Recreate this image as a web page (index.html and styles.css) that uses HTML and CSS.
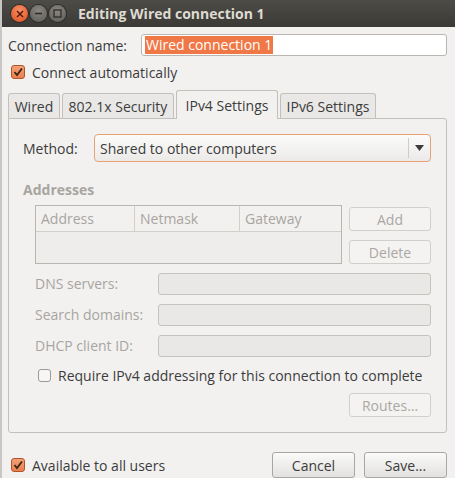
FILE: index.html
```html
<!DOCTYPE html>
<html lang="en">
<head>
  <meta charset="UTF-8" />
  <meta name="viewport" content="width=device-width, initial-scale=1.0">
  <title>Editing Wired connection 1</title>
  <link rel="stylesheet" href="styles.css">
</head>
<body>
  <div class="window">
    <div class="titlebar">
      <div class="wm-buttons">
        <span class="wm-btn close">
          <svg width="8" height="8" viewBox="0 0 8 8"><path d="M1 1 L7 7 M7 1 L1 7" stroke="#5a1a08" stroke-width="1.6"/></svg>
        </span>
        <span class="wm-btn">
          <svg width="9" height="9" viewBox="0 0 9 9"><path d="M1 4.5 H8" stroke="#2e2d2a" stroke-width="1.6"/></svg>
        </span>
        <span class="wm-btn">
          <svg width="9" height="9" viewBox="0 0 9 9"><rect x="1" y="1" width="7" height="7" fill="none" stroke="#2e2d2a" stroke-width="1.3"/></svg>
        </span>
      </div>
      <span class="title">Editing Wired connection 1</span>
    </div>

    <div class="content">
      <div class="name-row">
        <label>Connection name:</label>
        <div class="entry"><span class="selected">Wired connection 1</span></div>
      </div>

      <div class="check-row">
        <span class="check on">
          <svg width="12" height="12" viewBox="0 0 12 12"><path d="M2.5 6 L5 9 L10 2.5" fill="none" stroke="#3a2416" stroke-width="1.8"/></svg>
        </span>
        <span>Connect automatically</span>
      </div>

      <div class="tabs">
        <span class="tab tab-wired">Wired</span>
        <span class="tab tab-sec">802.1x Security</span>
        <span class="tab active">IPv4 Settings</span>
        <span class="tab tab-v6">IPv6 Settings</span>
      </div>

      <div class="panel">
        <div class="method-row">
          <label>Method:</label>
          <div class="combo">
            <span class="combo-text">Shared to other computers</span>
            <span class="combo-arrow">
              <svg width="9" height="6" viewBox="0 0 9 6"><path d="M0 0 H9 L4.5 6 Z" fill="#3c3c3c"/></svg>
            </span>
          </div>
        </div>

        <div class="section-title">Addresses</div>

        <div class="addresses">
          <div class="table">
            <div class="thead">
              <span class="col c1">Address</span>
              <span class="col c2">Netmask</span>
              <span class="col c3">Gateway</span>
            </div>
            <div class="tbody"></div>
          </div>
          <div class="side-buttons">
            <span class="btn disabled">Add</span>
            <span class="btn disabled">Delete</span>
          </div>
        </div>

        <div class="field-row">
          <label>DNS servers:</label>
          <div class="entry disabled"></div>
        </div>
        <div class="field-row">
          <label>Search domains:</label>
          <div class="entry disabled"></div>
        </div>
        <div class="field-row">
          <label>DHCP client ID:</label>
          <div class="entry disabled"></div>
        </div>

        <div class="require-row">
          <span class="check"></span>
          <span>Require IPv4 addressing for this connection to complete</span>
        </div>

        <div class="routes-row">
          <span class="btn disabled routes">Routes…</span>
        </div>
      </div>

      <div class="footer">
        <div class="check-row footer-check">
          <span class="check on">
            <svg width="12" height="12" viewBox="0 0 12 12"><path d="M2.5 6 L5 9 L10 2.5" fill="none" stroke="#3a2416" stroke-width="1.8"/></svg>
          </span>
          <span>Available to all users</span>
        </div>
        <div class="footer-buttons">
          <span class="btn">Cancel</span>
          <span class="btn">Save...</span>
        </div>
      </div>
    </div>
  </div>
</body>
</html>
```

FILE: styles.css
```css
body {
  margin: 0;
  background-color: #f2f1f0;
  font-family: "Open Sans", "Liberation Sans", sans-serif;
  font-size: 14px;
  color: #3c3c3c;
}
.window {
  width: 455px;
  height: 478px;
  overflow: hidden;
  box-sizing: border-box;
  border-left: 2px solid #c9c7c3;
}
.titlebar {
  height: 27px;
  margin-left: -2px;
  display: flex;
  align-items: center;
  background: linear-gradient(#4d4c47, #3a3935);
  color: #dfdbd2;
}
.wm-buttons {
  display: flex;
  gap: 2px;
  padding-left: 11px;
  width: 67px;
}
.wm-btn {
  width: 17px;
  height: 17px;
  border-radius: 50%;
  display: flex;
  align-items: center;
  justify-content: center;
  background: radial-gradient(circle at 50% 35%, #8a8780, #5b5954);
  box-shadow: 0 0 0 1px #2d2c29;
}
.wm-btn.close {
  background: radial-gradient(circle at 50% 35%, #f79168, #dd4c1b);
}
.title {
  font-weight: bold;
  font-size: 14px;
}
.content {
  padding: 0 8px 0 6px;
}
.name-row {
  display: flex;
  align-items: center;
  margin-top: 7px;
  height: 22px;
}
.name-row label {
  width: 133px;
}
.entry {
  flex: 1;
  height: 22px;
  box-sizing: border-box;
  border: 1px solid #bab7b2;
  border-radius: 3px;
  background-color: #fff;
  display: flex;
  align-items: center;
  padding-left: 3px;
}
.selected {
  background-color: #f07746;
  color: #fff;
  line-height: 18px;
  padding: 0 1px;
}
.check-row {
  display: flex;
  align-items: center;
  gap: 7px;
  margin-top: 9px;
  height: 14px;
  padding-left: 3px;
}
.check {
  width: 14px;
  height: 14px;
  box-sizing: border-box;
  border: 1px solid #a7a49f;
  border-radius: 3px;
  background: linear-gradient(#ffffff, #ebeae8);
  display: flex;
  align-items: center;
  justify-content: center;
}
.check.on {
  border-color: #b0542a;
  background: linear-gradient(#f4a177, #e9804e);
}
.tabs {
  display: flex;
  align-items: flex-end;
  margin-top: 11px;
  height: 28px;
  gap: 2px;
}
.tab {
  height: 25px;
  box-sizing: border-box;
  border: 1px solid #c3c0bb;
  border-bottom: none;
  border-radius: 3px 3px 0 0;
  background-color: #e9e8e6;
  display: flex;
  align-items: center;
  justify-content: center;
}
.tab-wired { width: 52px; }
.tab-sec { width: 112px; }
.tab-v6 { width: 96px; }
.tab.active {
  width: 102px;
  height: 29px;
  background-color: #f2f1f0;
  margin-bottom: -1px;
  position: relative;
  z-index: 1;
}
.panel {
  height: 315px;
  box-sizing: border-box;
  border: 1px solid #c3c0bb;
  border-radius: 0 3px 3px 3px;
  padding: 15px 15px 0 14px;
}
.method-row {
  display: flex;
  align-items: center;
  height: 28px;
}
.method-row label {
  width: 71px;
}
.combo {
  flex: 1;
  height: 28px;
  box-sizing: border-box;
  border: 1px solid #e8a078;
  border-radius: 4px;
  background: linear-gradient(#fbfbfa, #ebeae8);
  display: flex;
  align-items: center;
}
.combo-text {
  flex: 1;
  padding-left: 5px;
}
.combo-arrow {
  width: 21px;
  height: 20px;
  border-left: 1px solid #cfccc7;
  display: flex;
  align-items: center;
  justify-content: center;
}
.section-title {
  margin-top: 19px;
  height: 17px;
  line-height: 17px;
  font-weight: bold;
  color: #a8a5a0;
}
.addresses {
  display: flex;
  gap: 7px;
  margin-top: 7px;
  padding-left: 12px;
}
.table {
  width: 307px;
  height: 59px;
  box-sizing: border-box;
  border: 1px solid #b9b6b1;
  display: flex;
  flex-direction: column;
}
.thead {
  display: flex;
  height: 25px;
  border-bottom: 1px solid #d3d0cc;
  color: #a8a5a0;
}
.col {
  display: flex;
  align-items: center;
  padding-left: 5px;
  box-sizing: border-box;
}
.c1 { width: 99px; border-right: 1px solid #d3d0cc; }
.c2 { width: 105px; border-right: 1px solid #d3d0cc; }
.c3 { flex: 1; }
.tbody {
  flex: 1;
  background-color: #eeedec;
}
.side-buttons {
  flex: 1;
  display: flex;
  flex-direction: column;
  gap: 9px;
  padding-top: 2px;
}
.btn {
  height: 25px;
  box-sizing: border-box;
  border: 1px solid #a9a6a1;
  border-radius: 3px;
  background: linear-gradient(#fafaf9, #e2e1df);
  display: flex;
  align-items: center;
  justify-content: center;
}
.btn.disabled {
  height: 24px;
  border-color: #d2cfcb;
  background: #f4f3f2;
  color: #aaa7a2;
}
.field-row {
  display: flex;
  align-items: center;
  height: 23px;
  margin-top: 8px;
  padding-left: 12px;
  color: #a8a5a0;
}
.field-row label {
  width: 123px;
}
.entry.disabled {
  background-color: #e9e8e6;
  border-color: #c6c3be;
}
.require-row {
  display: flex;
  align-items: center;
  gap: 7px;
  margin-top: 11px;
  height: 14px;
  padding-left: 15px;
}
.require-row .check {
  width: 13px;
  height: 13px;
  border-color: #9c9994;
  background: #f7f6f5;
}
.routes-row {
  display: flex;
  justify-content: flex-end;
  margin-top: 11px;
}
.routes {
  width: 82px;
}
.footer {
  display: flex;
  align-items: center;
  justify-content: space-between;
  margin-top: 19px;
}
.footer .footer-check {
  margin-top: 0;
  padding-left: 3px;
}
.footer-buttons {
  display: flex;
  gap: 9px;
}
.footer-buttons .btn {
  width: 83px;
  height: 26px;
}
```
